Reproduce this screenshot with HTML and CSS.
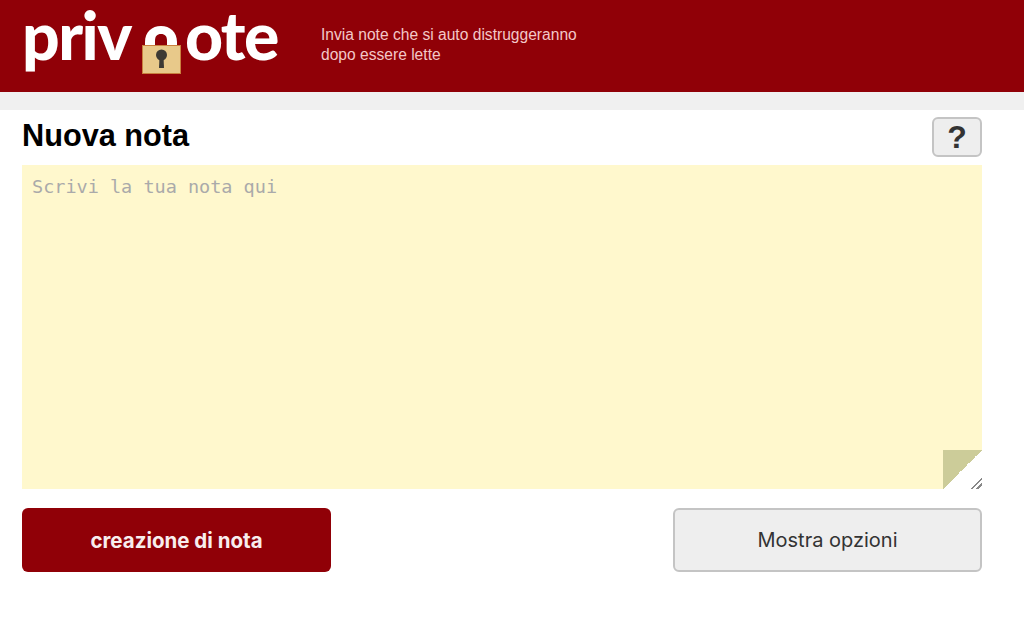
FILE: index.html
```html
<!DOCTYPE html>
<html lang="it">
<head>
    <meta charset="UTF-8">
    <meta name="viewport" content="width=device-width, initial-scale=1.0">
    <title>Privnote - Invia note che si auto distruggeranno</title>
    <link rel="stylesheet" href="styles.css">
</head>
<body>
    <header class="top-bar">
        <div class="logo">
            <span class="logo-text">priv<span class="logo-n">n</span>ote</span>
            <!-- lucchetto sopra la n -->
            <svg class="logo-lock" width="44" height="52" viewBox="0 0 44 52">
                <rect x="0" y="0" width="44" height="38" fill="#900007"/>
                <path d="M5 24V18C5 8 12 2 21 2S37 8 37 18V24H27V17C27 12 25 10 21 10S15 12 15 17V24Z" fill="#fff"/>
                <rect x="2.5" y="21.5" width="38" height="28" fill="#e8c98a" stroke="#c9803f"/>
                <circle cx="21.5" cy="31" r="5.5" fill="#3d3a34"/>
                <path d="M19.5 33H23.5L24 44H19Z" fill="#3d3a34"/>
            </svg>
        </div>
        <p class="tagline">Invia note che si auto distruggeranno<br>dopo essere lette</p>
    </header>
    <div class="strip"></div>

    <main class="content">
        <div class="title-row">
            <h1>Nuova nota</h1>
            <button class="help-button">?</button>
        </div>
        <textarea class="note" placeholder="Scrivi la tua nota qui"></textarea>
        <div class="actions">
            <button class="action create">creazione di nota</button>
            <button class="action options">Mostra opzioni</button>
        </div>
    </main>
</body>
</html>
```

FILE: styles.css
```css
body {
    margin: 0;
    background-color: #fff;
    font-family: "Liberation Sans", Arial, sans-serif;
}

.top-bar {
    height: 92px;
    background-color: #900007;
    display: flex;
    align-items: flex-start;
    padding-left: 22px;
}

.logo {
    position: relative;
    width: 258px;
    height: 92px;
}

.logo-text {
    display: block;
    font-family: Lato, sans-serif;
    font-weight: 900;
    font-size: 66px;
    line-height: 69px;
    letter-spacing: -1.5px;
    white-space: nowrap;
    color: #fff;
}

/* la n finisce sotto il lucchetto */
.logo-n {
    display: inline-block;
    width: 54px;
    text-align: center;
}

.logo-lock {
    position: absolute;
    left: 118px;
    top: 24px;
}

.tagline {
    margin: 25px 0 0 41px;
    font-size: 15.6px;
    line-height: 20px;
    color: #f3c8c8;
}

.strip {
    height: 18px;
    background-color: #f0f0f0;
}

.content {
    width: 960px;
    margin-left: 22px;
}

.title-row {
    display: flex;
    justify-content: space-between;
    align-items: center;
    height: 54px;
    margin-bottom: 1px;
}

h1 {
    margin: 0 0 3px;
    font-size: 30.7px;
    font-weight: 700;
    color: #000;
}

.help-button {
    width: 50px;
    height: 40px;
    padding: 0;
    background-color: #eee;
    border: 2px solid #c4c4c4;
    border-radius: 6px;
    font-family: "Liberation Sans", Arial, sans-serif;
    font-size: 32px;
    font-weight: 700;
    color: #333;
}

.note {
    display: block;
    box-sizing: border-box;
    width: 960px;
    height: 324px;
    padding: 10px;
    border: none;
    outline: none;
    background-color: #fff8cd;
    background-image: linear-gradient(135deg, #cccc99 50%, #fff 50%);
    background-size: 39px 39px;
    background-position: right bottom;
    background-repeat: no-repeat;
    font-family: "DejaVu Sans Mono", monospace;
    font-size: 18.5px;
    line-height: 23px;
}

.note::placeholder {
    color: #aaa;
    opacity: 1;
}

/* maniglia grigia nell'angolo */
.note::-webkit-resizer {
    background-color: transparent;
    background-image: linear-gradient(135deg, transparent 63%, #888 63%, #888 70%, transparent 70%, transparent 80%, #888 80%, #888 87%, transparent 87%);
}

.actions {
    display: flex;
    justify-content: space-between;
    margin-top: 19px;
}

.action {
    box-sizing: border-box;
    width: 309px;
    height: 64px;
    border-radius: 6px;
    font-family: Inter, sans-serif;
    font-size: 20px;
}

.create {
    background-color: #900007;
    border: none;
    color: #f8eeee;
    font-size: 20.5px;
    font-weight: 700;
}

.options {
    background-color: #eee;
    border: 2px solid #c4c4c4;
    color: #333;
    font-weight: 400;
}
```
